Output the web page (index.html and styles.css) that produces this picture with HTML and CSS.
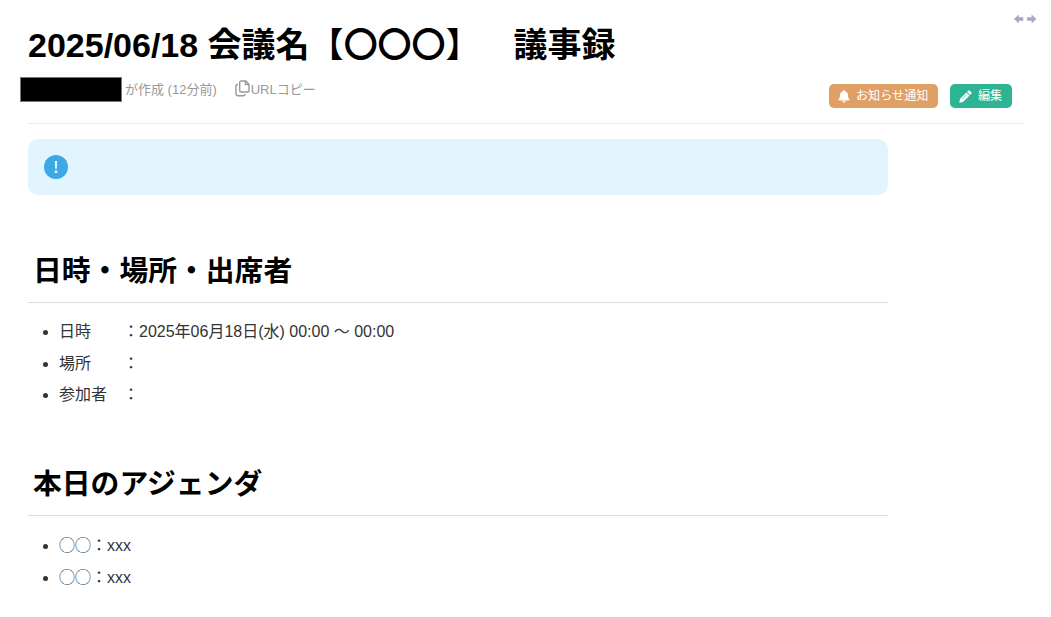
FILE: index.html
```html
<!DOCTYPE html>
<html lang="ja">
<head>
  <meta charset="UTF-8">
  <title>議事録</title>
  <link rel="stylesheet" href="styles.css">
</head>
<body>

  <div class="page">
    <svg class="expand-icon" width="23" height="10" viewBox="0 0 23 10">
      <path d="M0 5 4.8 0.4V3.3H9.3V6.7H4.8V9.6Z" />
      <path d="M22.4 5 17.6 0.4V3.3H13.1V6.7H17.6V9.6Z" />
    </svg>

    <header class="header">
      <h1 class="title">2025/06/18 会議名【<span class="circles">〇〇〇</span>】　議事録</h1>
      <div class="header-row">
        <div class="meta">
          <span class="author-mask"></span>
          <span class="created">が作成 (12分前)</span>
          <span class="copy-url">
            <svg class="copy-icon" width="15" height="17" viewBox="0 0 15 17">
              <path d="M6.2 1H10.8L14 4.2V10.5Q14 12 12.5 12H6.2Q4.7 12 4.7 10.5V2.5Q4.7 1 6.2 1ZM10.4 1.2V4.5H13.8" />
              <path d="M3 4.5H2.3Q1 4.5 1 6V14Q1 15.7 2.5 15.7H8.5Q10 15.7 10 14" />
            </svg>
            <span>URLコピー</span>
          </span>
        </div>
        <div class="actions">
          <button class="button notify">
            <svg class="bell-icon" width="12" height="13" viewBox="0 0 12 13">
              <path d="M5.2 0.8Q5.2 0 6 0T6.8 0.8V1.3Q9.7 1.9 9.9 5C10 7.5 10.6 8.2 11.4 9.2Q11.8 10.3 10.8 10.4H1.2Q0.2 10.3 0.6 9.2C1.4 8.2 2 7.5 2.1 5Q2.3 1.9 5.2 1.3ZM4.4 11.1H7.6Q7.4 12.6 6 12.6T4.4 11.1Z" />
            </svg>
            <span>お知らせ通知</span>
          </button>
          <button class="button edit">
            <svg class="pencil-icon" width="13" height="13" viewBox="0 0 13 13">
              <path d="M0.3 12.7 1 8.9 7.4 2.5 10.5 5.6 4.1 12ZM8.1 1.8 9.3 0.7Q10 0 10.8 0.7L12.3 2.2Q13 3 12.3 3.8L11.2 4.9Z" />
              <path class="pencil-line" d="M3.2 9 8 4.2" />
            </svg>
            <span>編集</span>
          </button>
        </div>
      </div>
    </header>

    <main class="content">
      <div class="notice">
        <svg width="24" height="24" viewBox="0 0 24 24">
          <circle cx="12" cy="12" r="12" fill="#3ea8e5" />
          <path d="M10.8 6H13.2L12.9 13.7H11.1Z" fill="#e2f4fe" />
          <circle cx="12" cy="16.7" r="1.5" fill="#e2f4fe" />
        </svg>
      </div>

      <h2 class="heading first">日時・場所・出席者</h2>
      <ul class="list">
        <li>日時　　：2025年06月18日(水) 00:00 ～ 00:00</li>
        <li>場所　　：</li>
        <li>参加者　：</li>
      </ul>

      <h2 class="heading">本日のアジェンダ</h2>
      <ul class="list agenda">
        <li>◯◯：xxx</li>
        <li>◯◯：xxx</li>
      </ul>
    </main>
  </div>

</body>
</html>
```
FILE: styles.css
```css
* {
  box-sizing: border-box;
}

body {
  margin: 0;
  height: 617px;
  overflow: hidden;
  background: #fff;
  color: #333;
  font-family: "Liberation Sans", "Noto Sans CJK JP", sans-serif;
  font-size: 16px;
  text-spacing-trim: space-all;
}

.page {
  position: relative;
  padding: 22px 27px 0 28px;
}

.expand-icon {
  position: absolute;
  top: 14px;
  right: 14px;
  fill: #a5abbd;
}

.header {
  height: 102px;
  border-bottom: 1px solid #eaeaea;
}

.title {
  margin: 0;
  height: 46px;
  line-height: 46px;
  font-size: 34px;
  color: #000;
  white-space: nowrap;
}

.circles {
  font-family: "Noto Sans CJK JP", sans-serif;
  line-height: 1;
}

.header-row {
  display: flex;
  justify-content: space-between;
  padding-right: 12px;
}

.meta {
  display: flex;
  align-items: center;
  height: 24px;
  margin: 9px 0 0 -8px;
  font-size: 13px;
  color: #999;
}

.author-mask {
  width: 102px;
  height: 25px;
  background: #000;
  border: 1px solid #777;
}

.created {
  margin: 0 18px 0 3px;
  padding-bottom: 2px;
}

.copy-url {
  display: flex;
  align-items: center;
  padding-bottom: 2px;
}

.copy-icon {
  margin-right: 1px;
  fill: none;
  stroke: #999;
  stroke-width: 1.4;
}

.actions {
  display: flex;
  gap: 12px;
  margin-top: 16px;
}

.button {
  display: flex;
  align-items: center;
  height: 24px;
  padding: 0 9px;
  border: none;
  border-radius: 5px;
  color: #fff;
  font-family: inherit;
  font-size: 12.1px;
  white-space: nowrap;
}

.button span {
  padding-bottom: 3px;
}

.button svg {
  margin-right: 6px;
  fill: #fff;
}

.notify {
  width: 109px;
  background: #e09f65;
}

.edit {
  width: 62px;
  background: #2db593;
}

.pencil-line {
  stroke: #2db593;
  stroke-width: 0.6;
}

.content {
  width: 860px;
}

.notice {
  height: 56px;
  margin-top: 15px;
  padding: 16px;
  border-radius: 10px;
  background: #e2f4fe;
}

.heading {
  height: 58px;
  margin: 47px 0 0;
  padding-left: 5px;
  border-bottom: 1px solid #ddd;
  font-size: 28.8px;
  line-height: 52px;
  color: #000;
}

.heading.first {
  margin-top: 50px;
}

.list {
  margin: 13.2px 0 0;
  padding-left: 31px;
}

.list.agenda {
  margin-top: 14px;
}

.list li {
  height: 31.6px;
  line-height: 31.6px;
}

.list li::marker {
  font-size: 15px;
}
```
